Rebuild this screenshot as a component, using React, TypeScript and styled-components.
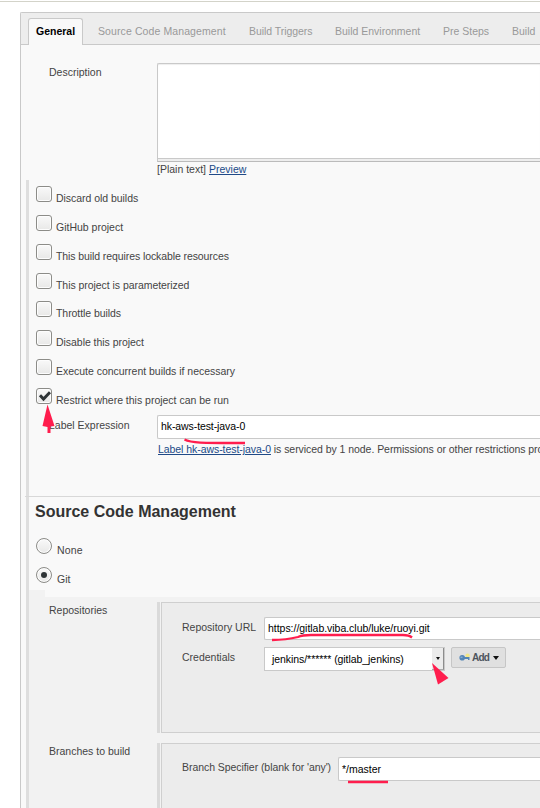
import React from "react";
import styled, { createGlobalStyle } from "styled-components";

const GlobalStyle = createGlobalStyle`
  * { box-sizing: border-box; }
  body {
    margin: 0;
    background: #fff;
    font-family: "Liberation Sans", Arial, sans-serif;
    font-size: 10.5px;
    line-height: 14px;
    color: #444;
  }
`;

const Page = styled.div`
  position: relative;
  width: 540px;
  height: 808px;
  overflow: hidden;
  padding-top: 1px;
`;

const HeaderRule = styled.div`
  height: 1px;
  background: #d3d3c9;
  margin-bottom: 10px;
`;

const ConfigPanel = styled.main`
  margin-left: 20px;
  height: 796px;
  border: 1px solid #c9c9c9;
  border-width: 1px 0 0 1px;
  border-top-left-radius: 2px;
  background: #f9f9f9;
  white-space: nowrap;
`;

const TabBar = styled.nav`
  display: flex;
  align-items: flex-end;
  height: 32px;
  padding-left: 7px;
  background: #ededed;
  border-bottom: 1px solid #c9c9c9;
`;

const Tab = styled.div<{ $active?: boolean; $width: number }>`
  flex: none;
  width: ${(p) => p.$width}px;
  height: 27px;
  margin-bottom: -1px;
  padding: 5px 0 0 ${(p) => (p.$active ? 7 : 14)}px;
  border: 1px solid ${(p) => (p.$active ? "#c9c9c9" : "transparent")};
  border-bottom: 0;
  border-radius: 3px 3px 0 0;
  background: ${(p) => (p.$active ? "#f9f9f9" : "transparent")};
  color: ${(p) => (p.$active ? "#000" : "#999")};
  font-weight: ${(p) => (p.$active ? "bold" : "normal")};
`;

const Tracked = styled.span<{ $by: number }>`
  letter-spacing: ${(p) => p.$by}px;
`;

const DescriptionRow = styled.div`
  display: flex;
  height: 135px;
  padding: 18px 0 0 28px;
`;

const FieldLabel = styled.div<{ $width: number; $top?: number }>`
  flex: none;
  width: ${(p) => p.$width}px;
  padding-top: ${(p) => p.$top ?? 0}px;
`;

const FieldColumn = styled.div`
  flex: 1;
  min-width: 0;
`;

const TextArea = styled.div`
  height: 96px;
  border: 1px solid #c9c9c9;
  border-right: 0;
  border-top-left-radius: 2px;
  background: #fff;
  box-shadow: inset 0 1px 1px #eee;
`;

const ResizeHandle = styled.div`
  height: 3px;
  background: #eee;
  border-bottom: 1px solid #bbb;
  border-left: 1px solid #c9c9c9;
`;

const Link = styled.a`
  color: #204a87;
  text-decoration: underline;
`;

const FormatNote = styled.div``;

const Sections = styled.div`
  margin-left: 5px;
  height: 628px;
  border-left: 3px solid #dedede;
`;

const OptionList = styled.div`
  padding-top: 2px;
  height: 232px;
`;

const Option = styled.label<{ $height: number; $gap: number }>`
  display: flex;
  gap: ${(p) => p.$gap}px;
  height: ${(p) => p.$height}px;
  padding: 4px 0 0 7px;
`;

const OptionText = styled.span<{ $track?: number }>`
  padding-top: 5px;
  letter-spacing: ${(p) => p.$track ?? 0}px;
`;

const Toggle = styled.span<{ $round?: boolean }>`
  display: flex;
  align-items: center;
  justify-content: center;
  flex: none;
  width: 16px;
  height: 16px;
  border: 1px solid #8c8c88;
  border-radius: ${(p) => (p.$round ? "50%" : "3px")};
  background: linear-gradient(#f9f9f9, #e8e8e7);
  box-shadow: inset 0 0 0 1px #fdfdfd;
`;

const RadioDot = styled.span`
  width: 6px;
  height: 6px;
  border-radius: 50%;
  background: #2e3436;
`;

const CheckMark = styled.svg`
  flex: none;
  width: 14px;
  height: 14px;
`;

const LabelRow = styled.div`
  display: flex;
  height: 84px;
  padding: 3px 0 0 20px;
`;

const TextInput = styled.div<{ $height: number; $top?: number }>`
  height: ${(p) => p.$height}px;
  padding: ${(p) => p.$top ?? 3}px 0 0 3px;
  border: 1px solid #c9c9c9;
  border-right: 0;
  border-radius: 2px 0 0 2px;
  background: #fff;
  color: #000;
`;

const Hint = styled.div`
  padding: 3px 0 0 1px;
`;

const Divider = styled.div`
  height: 1px;
  margin-left: -4px;
  background: #d8d8d8;
`;

const Heading = styled.h2`
  height: 37px;
  margin: 0;
  padding: 5px 0 0 6px;
  font-size: 16px;
  line-height: 20px;
  color: #333;
`;

const RadioList = styled.div`
  height: 56px;
`;

const ScmSpacer = styled.div`
  width: 16px;
  height: 7px;
  background: #f2f2f2;
`;

const ScmBlock = styled.div`
  display: flex;
  flex-direction: column;
  gap: 10px;
  padding: 5px 0 0 20px;
  height: 211px;
  background: #f2f2f2;
`;

const ScmRow = styled.div<{ $height: number }>`
  display: flex;
  flex: none;
  height: ${(p) => p.$height}px;
`;

const GroupRail = styled.div`
  flex: 1;
  border-left: 3px solid #dadada;
  padding-left: 1px;
`;

const GroupBox = styled.div<{ $top: number }>`
  height: 100%;
  padding: ${(p) => p.$top}px 0 0 20px;
  border: 1px solid #cfcfcf;
  border-right: 0;
  background: #ececec;
`;

const InlineField = styled.div<{ $height: number }>`
  display: flex;
  height: ${(p) => p.$height}px;
`;

const Select = styled.div`
  display: flex;
  justify-content: space-between;
  width: 181px;
  height: 24px;
  padding-left: 7px;
  border: 1px solid #c9c9c9;
  background: #fff;
  color: #000;
  line-height: 23px;
`;

const SelectArrow = styled.span`
  display: flex;
  align-items: center;
  justify-content: center;
  width: 12px;
  background: #ececec;
  border-right: 1px solid #8d8d8d;
  border-bottom: 1px solid #aaa;
`;

const Caret = styled.span<{ $side: number; $depth: number }>`
  flex: none;
  width: 0;
  height: 0;
  border: ${(p) => p.$side}px solid transparent;
  border-top: ${(p) => p.$depth}px solid #111;
  border-bottom: 0;
`;

const AddButton = styled.button`
  display: flex;
  align-items: center;
  width: 55px;
  height: 21px;
  margin: 0 0 0 6px;
  padding: 0 0 0 7px;
  border: 1px solid #c6c6c6;
  border-radius: 2px;
  background: #e0e0e0;
  color: #4d545d;
  font: bold 10px "Liberation Sans", Arial, sans-serif;
  letter-spacing: -0.8px;
`;

const AddText = styled.span`
  width: 17px;
  margin: 0 4px 0 1px;
`;

const Annotations = styled.svg`
  position: absolute;
  left: 0;
  top: 0;
  pointer-events: none;
`;

const tabs = [
  { name: "General", width: 55, active: true, track: 0 },
  { name: "Source Code Management", width: 151, track: 0.1 },
  { name: "Build Triggers", width: 86, track: -0.05 },
  { name: "Build Environment", width: 108, track: 0 },
  { name: "Pre Steps", width: 69, track: 0 },
  { name: "Build", width: 50, track: 0 },
];

const options = [
  { name: "Discard old builds", height: 29, track: -0.04 },
  { name: "GitHub project", height: 29 },
  { name: "This build requires lockable resources", height: 29, track: -0.09 },
  { name: "This project is parameterized", height: 28, track: -0.05 },
  { name: "Throttle builds", height: 29, track: -0.06 },
  { name: "Disable this project", height: 29, track: -0.04 },
  { name: "Execute concurrent builds if necessary", height: 29, track: -0.02 },
  { name: "Restrict where this project can be run", height: 28, track: -0.01, checked: true },
];

const KeyIcon = () => (
  <svg width="12" height="10" viewBox="0 0 12 10">
    <circle cx="8.6" cy="2.8" r="2.2" fill="#f2e785" />
    <circle cx="3.2" cy="4.8" r="2.8" fill="#5485b5" />
    <path d="M5 4h5.500v3H9V6H5z" fill="#5485b5" />
    <path d="M1.500 4.200h2" stroke="#9fbfdd" />
  </svg>
);

export default function App() {
  return (
    <Page>
      <GlobalStyle />
      <HeaderRule />
      <ConfigPanel>
        <TabBar>
          {tabs.map((t) => (
            <Tab key={t.name} $width={t.width} $active={t.active}>
              <Tracked $by={t.track}>{t.name}</Tracked>
            </Tab>
          ))}
        </TabBar>
        <DescriptionRow>
          <FieldLabel $width={108} $top={2}>Description</FieldLabel>
          <FieldColumn>
            <TextArea />
            <ResizeHandle />
            <FormatNote>
              [Plain text] <Link>Preview</Link>
            </FormatNote>
          </FieldColumn>
        </DescriptionRow>
        <Sections>
          <OptionList>
            {options.map((o) => (
              <Option key={o.name} $height={o.height} $gap={4}>
                <Toggle>
                  {o.checked && (
                    <CheckMark viewBox="0 0 14 14">
                      <path d="M3 6.300l3.500 3.700 6.500-6.800" fill="none" stroke="#2e3436" strokeWidth="3" />
                    </CheckMark>
                  )}
                </Toggle>
                <OptionText $track={o.track}>{o.name}</OptionText>
              </Option>
            ))}
          </OptionList>
          <LabelRow>
            <FieldLabel $width={108} $top={3}>Label Expression</FieldLabel>
            <FieldColumn>
              <TextInput $height={24}>
                <Tracked $by={-0.09}>hk-aws-test-java-0</Tracked>
              </TextInput>
              <Hint>
                <Link>
                  <Tracked $by={-0.06}>Label hk-aws-test-java-0</Tracked>
                </Link>
                <Tracked $by={-0.05}> is serviced by 1 node. Permissions or other restrictions pro</Tracked>
              </Hint>
            </FieldColumn>
          </LabelRow>
          <Divider />
          <Heading>Source Code Management</Heading>
          <RadioList>
            <Option $height={29} $gap={5}>
              <Toggle $round />
              <OptionText $track={0.15}>None</OptionText>
            </Option>
            <Option $height={27} $gap={5}>
              <Toggle $round>
                <RadioDot />
              </Toggle>
              <OptionText $track={0}>Git</OptionText>
            </Option>
          </RadioList>
          <ScmSpacer />
          <ScmBlock>
            <ScmRow $height={131}>
              <FieldLabel $width={108} $top={1}>Repositories</FieldLabel>
              <GroupRail>
                <GroupBox $top={14}>
                  <InlineField $height={30}>
                    <FieldLabel $width={82} $top={3}>Repository URL</FieldLabel>
                    <FieldColumn>
                      <TextInput $height={23}>
                        <Tracked $by={-0.03}>https://gitlab.viba.club/luke/ruoyi.git</Tracked>
                      </TextInput>
                    </FieldColumn>
                  </InlineField>
                  <InlineField $height={30}>
                    <FieldLabel $width={82} $top={3}>Credentials</FieldLabel>
                    <Select>
                      <Tracked $by={-0.06}>jenkins/****** (gitlab_jenkins)</Tracked>
                      <SelectArrow>
                        <Caret $side={2.5} $depth={3} />
                      </SelectArrow>
                    </Select>
                    <AddButton>
                      <KeyIcon />
                      <AddText>Add</AddText>
                      <Caret $side={3} $depth={4} />
                    </AddButton>
                  </InlineField>
                </GroupBox>
              </GroupRail>
            </ScmRow>
            <ScmRow $height={75}>
              <FieldLabel $width={108} $top={1}>Branches to build</FieldLabel>
              <GroupRail>
                <GroupBox $top={13}>
                  <InlineField $height={24}>
                    <FieldLabel $width={156} $top={3}>
                      <Tracked $by={-0.06}>Branch Specifier (blank for 'any')</Tracked>
                    </FieldLabel>
                    <FieldColumn>
                      <TextInput $height={24} $top={4}>*/master</TextInput>
                    </FieldColumn>
                  </InlineField>
                </GroupBox>
              </GroupRail>
            </ScmRow>
          </ScmBlock>
        </Sections>
      </ConfigPanel>
      <Annotations width="540" height="808" fill="none" stroke="#ff1d4d" strokeWidth="2.3">
        <path d="M47.500 404.500l7 21.500-4 .6V433h-3v-6l-5-1z" fill="#ff1d4d" stroke="none" />
        <path d="M184.500 439.500C191 443 200 443 245 443" />
        <path d="M272 640c12 0 18-1 26-3 4-2 8-2 13-2h92c4 0 6 0 9 2.500" />
        <path d="M432 663l16.500 15-10.500 6.500z" fill="#ff1d4d" stroke="none" />
        <path d="M348 782h40" />
      </Annotations>
    </Page>
  );
}
